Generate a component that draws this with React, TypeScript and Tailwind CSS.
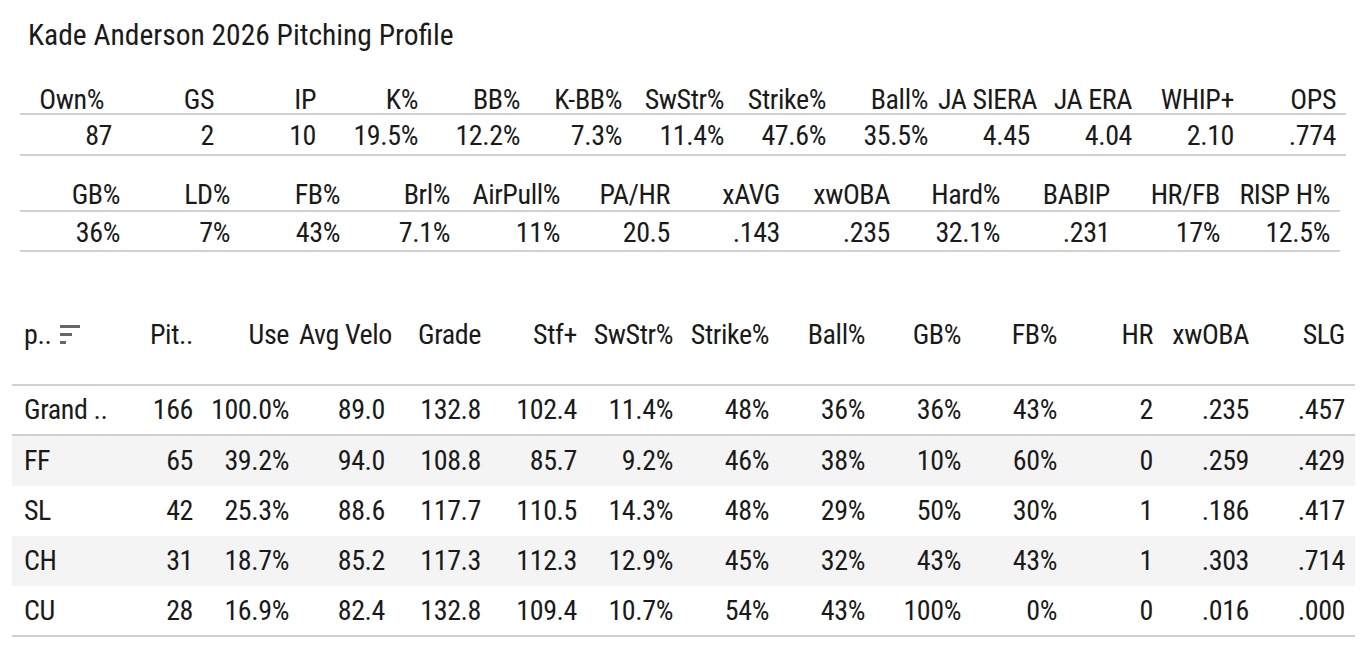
import React from 'react';

const font = { fontFamily: '"Roboto Condensed", "DejaVu Sans Condensed", Roboto, sans-serif' };

const profileTop = {
  cols: ['Own%', 'GS', 'IP', 'K%', 'BB%', 'K-BB%', 'SwStr%', 'Strike%', 'Ball%', 'JA SIERA', 'JA ERA', 'WHIP+', 'OPS'],
  vals: ['87', '2', '10', '19.5%', '12.2%', '7.3%', '11.4%', '47.6%', '35.5%', '4.45', '4.04', '2.10', '.774'],
};

const profileBottom = {
  cols: ['GB%', 'LD%', 'FB%', 'Brl%', 'AirPull%', 'PA/HR', 'xAVG', 'xwOBA', 'Hard%', 'BABIP', 'HR/FB', 'RISP H%'],
  vals: ['36%', '7%', '43%', '7.1%', '11%', '20.5', '.143', '.235', '32.1%', '.231', '17%', '12.5%'],
};

const pitchCols = ['Pit..', 'Use', 'Avg Velo', 'Grade', 'Stf+', 'SwStr%', 'Strike%', 'Ball%', 'GB%', 'FB%', 'HR', 'xwOBA', 'SLG'];

const pitchRows: string[][] = [
  ['Grand ..', '166', '100.0%', '89.0', '132.8', '102.4', '11.4%', '48%', '36%', '36%', '43%', '2', '.235', '.457'],
  ['FF', '65', '39.2%', '94.0', '108.8', '85.7', '9.2%', '46%', '38%', '10%', '60%', '0', '.259', '.429'],
  ['SL', '42', '25.3%', '88.6', '117.7', '110.5', '14.3%', '48%', '29%', '50%', '30%', '1', '.186', '.417'],
  ['CH', '31', '18.7%', '85.2', '117.3', '112.3', '12.9%', '45%', '32%', '43%', '43%', '1', '.303', '.714'],
  ['CU', '28', '16.9%', '82.4', '132.8', '109.4', '10.7%', '54%', '43%', '100%', '0%', '0', '.016', '.000'],
];

const SortIcon = () => (
  <svg width="20" height="20" viewBox="0 0 20 20" className="ml-[9px]">
    <rect x="0" y="0" width="20" height="3" fill="#666" />
    <rect x="0" y="8" width="12" height="3" fill="#666" />
    <rect x="0" y="16" width="6" height="3" fill="#666" />
  </svg>
);

const App: React.FC = () => {
  return (
    <div className="w-[1362px] h-[646px] bg-white text-[#1a1a1a] overflow-hidden" style={font}>
      <h1 className="pl-[28px] pt-[18px] pb-[2px] text-[29.5px] leading-[34px] font-normal">Kade Anderson 2026 Pitching Profile</h1>

      {/* season line */}
      <div className="ml-[20px] mt-[25px] w-[1326px] text-[28px] tracking-[-0.4px]">
        <div className="grid grid-cols-[repeat(13,102px)] h-[36px] items-center border-b-2 border-[#d0d0d0]">
          {profileTop.cols.map((c, i) => (
            <div key={c} className={`text-right whitespace-nowrap ${i === 0 ? 'pr-[18px]' : 'pr-[10px]'}`}>{c}</div>
          ))}
        </div>
        <div className="grid grid-cols-[repeat(13,102px)] h-[41px] items-center border-b-2 border-[#d0d0d0]">
          {profileTop.vals.map((v, i) => (
            <div key={i} className="text-right pr-[10px] whitespace-nowrap">{v}</div>
          ))}
        </div>
      </div>

      {/* batted ball line */}
      <div className="ml-[20px] mt-[18px] w-[1320px] text-[28px] tracking-[-0.4px]">
        <div className="grid grid-cols-[repeat(12,110px)] h-[38px] items-center border-b-2 border-[#d0d0d0]">
          {profileBottom.cols.map((c) => (
            <div key={c} className="text-right pr-[10px] whitespace-nowrap">{c}</div>
          ))}
        </div>
        <div className="grid grid-cols-[repeat(12,110px)] h-[40px] items-center border-b-2 border-[#d0d0d0]">
          {profileBottom.vals.map((v, i) => (
            <div key={i} className="text-right pr-[10px] whitespace-nowrap">{v}</div>
          ))}
        </div>
      </div>

      {/* pitch mix */}
      <div className="ml-[12px] mt-[34px] w-[1343px] text-[28px] tracking-[-0.4px]">
        <div className="grid grid-cols-[95px_repeat(13,96px)] h-[100px] items-center border-b-2 border-[#d0d0d0]">
          <div className="flex items-center pl-[12px]">
            <span>p..</span>
            <SortIcon />
          </div>
          {pitchCols.map((c) => (
            <div key={c} className="text-right pr-[10px] whitespace-nowrap">{c}</div>
          ))}
        </div>
        {pitchRows.map((row, r) => (
          <div
            key={row[0]}
            className={`grid grid-cols-[95px_repeat(13,96px)] items-center ${r === 0 ? 'h-[50px] border-b-2 border-[#d0d0d0]' : ''} ${r > 0 && r < pitchRows.length - 1 ? 'h-[50px]' : ''} ${r % 2 === 1 ? 'bg-[#f4f4f4]' : ''} ${r === pitchRows.length - 1 ? 'h-[51px] border-b-2 border-[#d0d0d0]' : ''}`}
          >
            {row.map((cell, i) => (
              <div key={i} className={`whitespace-nowrap ${i === 0 ? 'pl-[12px]' : 'text-right pr-[10px]'}`}>{cell}</div>
            ))}
          </div>
        ))}
      </div>
    </div>
  );
};

export default App;
